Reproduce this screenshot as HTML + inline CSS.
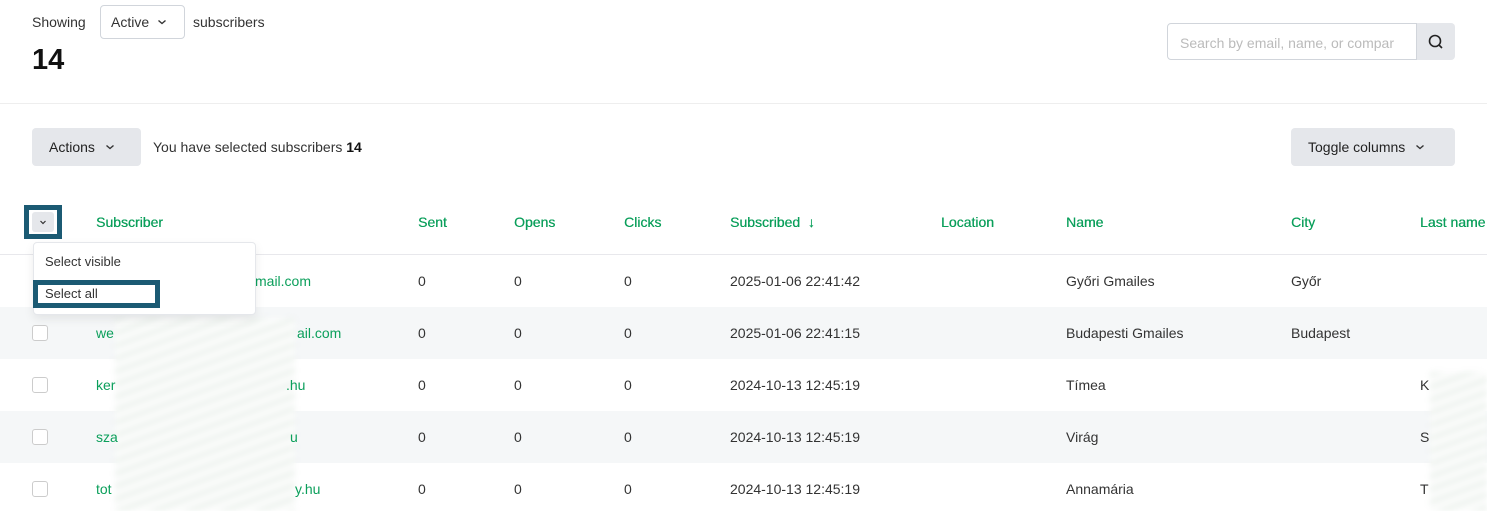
<!DOCTYPE html>
<html><head><meta charset="utf-8"><style>
*{box-sizing:border-box;margin:0;padding:0}
body{width:1487px;height:511px;overflow:hidden;background:#fff;font-family:"Liberation Sans",sans-serif;font-size:14px;color:#333;position:relative}
.a{position:absolute;white-space:nowrap}
.g{color:#0b9f5b}
.h{color:#0b9f5b;top:214px;text-shadow:0.3px 0 0 #0b9f5b}
.btn{position:absolute;background:#e5e7eb;border-radius:4px;color:#222}
.cb{position:absolute;left:32px;width:16px;height:16px;border:1px solid #ccc;border-radius:3px;background:#fff}
.blur{position:absolute;background:repeating-linear-gradient(160deg,#eef3ef 0 5px,#fbfcfb 5px 12px);filter:blur(3px)}
.chev{display:inline-block;vertical-align:middle;margin-left:8px}
</style></head><body>
<div class="a" style="left:32px;top:14px">Showing</div>
<div class="a" style="left:100px;top:5px;width:85px;height:34px;border:1px solid #d1d5db;border-radius:4px;padding:8px 0 0 10px">Active<svg class="chev" width="10" height="6" style="margin-top:-2px"><path d="M1.5 1.5L5 4.5L8.5 1.5" fill="none" stroke="#333" stroke-width="1.4"/></svg></div>
<div class="a" style="left:193px;top:14px">subscribers</div>
<div class="a" style="left:32px;top:44px;font-size:29px;font-weight:bold;color:#111">14</div>
<div class="a" style="left:1167px;top:23px;width:250px;height:37px;border:1px solid #d1d5db;border-radius:4px 0 0 4px;padding:11px 0 0 12px;color:#bbb;overflow:hidden">Search by email, name, or compar</div>
<div class="btn" style="left:1417px;top:23px;width:38px;height:37px;border-radius:0 4px 4px 0">
<svg width="38" height="37"><circle cx="18" cy="18" r="5.5" fill="none" stroke="#222" stroke-width="1.6"/><line x1="22" y1="22" x2="25" y2="25" stroke="#222" stroke-width="1.6"/></svg></div>
<div style="position:absolute;left:0;top:103px;width:1487px;height:1px;background:#eee"></div>
<div class="btn" style="left:32px;top:128px;width:109px;height:38px;padding:11px 0 0 17px">Actions<svg class="chev" width="10" height="6" style="margin-top:-2px;margin-left:10px"><path d="M1.5 1.5L5 4.5L8.5 1.5" fill="none" stroke="#333" stroke-width="1.4"/></svg></div>
<div class="a" style="left:153px;top:139px">You have selected subscribers <b style="color:#111">14</b></div>
<div class="btn" style="left:1291px;top:128px;width:164px;height:38px;padding:11px 0 0 17px">Toggle columns<svg class="chev" width="10" height="6" style="margin-top:-2px;margin-left:10px"><path d="M1.5 1.5L5 4.5L8.5 1.5" fill="none" stroke="#333" stroke-width="1.4"/></svg></div>
<div class="a" style="left:0;top:307px;width:1487px;height:52px;background:#f5f7f8"></div>
<div class="a" style="left:0;top:411px;width:1487px;height:52px;background:#f5f7f8"></div>
<div style="position:absolute;left:0;top:254px;width:1487px;height:1px;background:#e8e8ec"></div>
<div class="a" style="left:24px;top:205px;width:38px;height:34px;border:5px solid #1b5a73"></div>
<div class="a" style="left:32px;top:212px;width:22px;height:20px;background:#e5e7eb;border-radius:3px"><svg width="22" height="20"><path d="M8.5 9L11 11.5L13.5 9" fill="none" stroke="#333" stroke-width="1.2"/></svg></div>
<div class="a h" style="left:96px">Subscriber</div>
<div class="a h" style="left:418px">Sent</div>
<div class="a h" style="left:514px">Opens</div>
<div class="a h" style="left:624px">Clicks</div>
<div class="a h" style="left:730px">Subscribed &nbsp;&#8595;</div>
<div class="a h" style="left:941px">Location</div>
<div class="a h" style="left:1066px">Name</div>
<div class="a h" style="left:1291px">City</div>
<div class="a h" style="left:1420px">Last name</div>
<div class="blur" style="left:115px;top:318px;width:180px;height:193px"></div>
<div class="blur" style="left:1430px;top:372px;width:57px;height:139px"></div>
<div class="a g" style="left:255px;top:273px">mail.com</div>
<div class="a g" style="left:96px;top:325px">we</div><div class="a g" style="left:297px;top:325px">ail.com</div>
<div class="a g" style="left:96px;top:377px">ker</div><div class="a g" style="left:286px;top:377px">.hu</div>
<div class="a g" style="left:96px;top:429px">sza</div><div class="a g" style="left:290px;top:429px">u</div>
<div class="a g" style="left:96px;top:481px">tot</div><div class="a g" style="left:295px;top:481px">y.hu</div>
<div class="cb" style="top:325px"></div><div class="cb" style="top:377px"></div><div class="cb" style="top:429px"></div><div class="cb" style="top:481px"></div>
<div class="a" style="left:418px;top:273px">0</div><div class="a" style="left:514px;top:273px">0</div><div class="a" style="left:624px;top:273px">0</div><div class="a" style="left:730px;top:273px">2025-01-06 22:41:42</div><div class="a" style="left:1066px;top:273px">Győri Gmailes</div><div class="a" style="left:1291px;top:273px">Győr</div>
<div class="a" style="left:418px;top:325px">0</div><div class="a" style="left:514px;top:325px">0</div><div class="a" style="left:624px;top:325px">0</div><div class="a" style="left:730px;top:325px">2025-01-06 22:41:15</div><div class="a" style="left:1066px;top:325px">Budapesti Gmailes</div><div class="a" style="left:1291px;top:325px">Budapest</div>
<div class="a" style="left:418px;top:377px">0</div><div class="a" style="left:514px;top:377px">0</div><div class="a" style="left:624px;top:377px">0</div><div class="a" style="left:730px;top:377px">2024-10-13 12:45:19</div><div class="a" style="left:1066px;top:377px">Tímea</div><div class="a" style="left:1420px;top:377px">K</div>
<div class="a" style="left:418px;top:429px">0</div><div class="a" style="left:514px;top:429px">0</div><div class="a" style="left:624px;top:429px">0</div><div class="a" style="left:730px;top:429px">2024-10-13 12:45:19</div><div class="a" style="left:1066px;top:429px">Virág</div><div class="a" style="left:1420px;top:429px">S</div>
<div class="a" style="left:418px;top:481px">0</div><div class="a" style="left:514px;top:481px">0</div><div class="a" style="left:624px;top:481px">0</div><div class="a" style="left:730px;top:481px">2024-10-13 12:45:19</div><div class="a" style="left:1066px;top:481px">Annamária</div><div class="a" style="left:1420px;top:481px">T</div>
<div class="a" style="left:33px;top:242px;width:223px;height:73px;background:#fff;border:1px solid #e5e7eb;border-radius:4px;box-shadow:0 4px 10px rgba(0,0,0,.08)"></div>
<div class="a" style="left:45px;top:254px;font-size:13px">Select visible</div>
<div class="a" style="left:33px;top:280px;width:127px;height:28px;border:5px solid #1b5a73"></div>
<div class="a" style="left:45px;top:286px;font-size:13px">Select all</div>
</body></html>
